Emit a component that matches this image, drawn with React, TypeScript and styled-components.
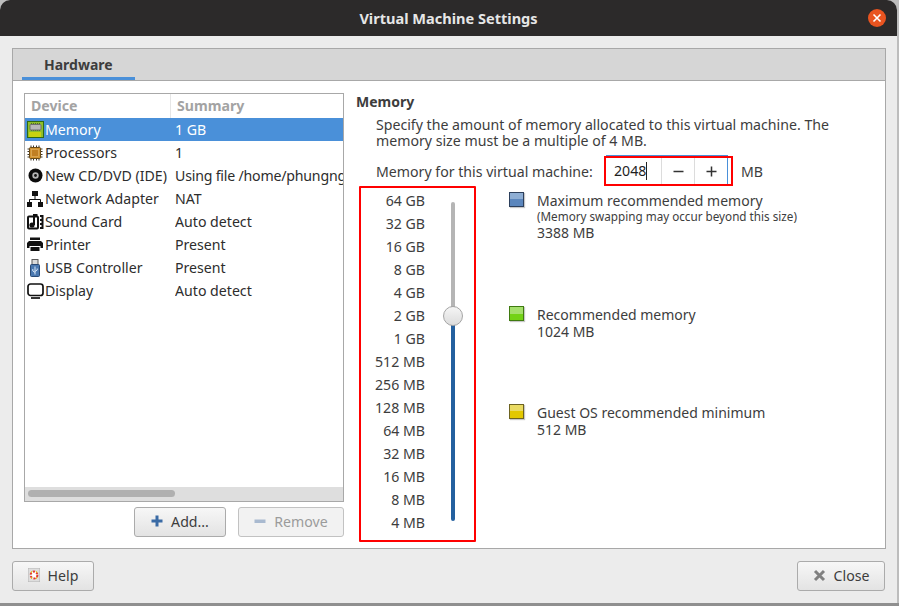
import styled, { createGlobalStyle } from "styled-components";

const Global = createGlobalStyle`
  html, body { margin: 0; padding: 0; background: #bdbdbd; }
  * { box-sizing: border-box; }
`;

const Dialog = styled.div`
  width: 899px;
  height: 606px;
  overflow: hidden;
  font-family: "Noto Sans", "Open Sans", sans-serif;
  font-size: 14.15px;
  color: #3d3d3d;
  background: linear-gradient(#0000 0 603px, #8f8f8f 603px);
`;
const Window = styled.div`
  width: 897px;
  height: 603px;
  background: #ececec;
  border-radius: 10px 10px 0 0;
  display: flex;
  flex-direction: column;
`;
const TitleBar = styled.header`
  height: 36px;
  flex: none;
  background: #2c2a2a;
  border-radius: 10px 10px 0 0;
  color: #e6e6e6;
  font-weight: 700;
  font-size: 14.55px;
  display: flex;
  align-items: center;
  justify-content: center;
  position: relative;
`;
const CloseDot = styled.span`
  position: absolute;
  right: 11px;
  top: 9px;
  width: 18px;
  height: 18px;
  border-radius: 50%;
  background: #e95420;
  display: flex;
  align-items: center;
  justify-content: center;
`;
const Panel = styled.section`
  margin: 12px 11px 0 12px;
  height: 501px;
  border: 1px solid #a8a8a8;
  background: #fff;
  display: flex;
  flex-direction: column;
`;
const TabBar = styled.div`
  height: 32px;
  flex: none;
  background: #d6d6d6;
  border-bottom: 1px solid #a8a8a8;
  padding-left: 9px;
`;
const Tab = styled.div`
  width: 113px;
  height: 31px;
  border-bottom: 3px solid #4a90d9;
  padding-left: 22px;
  font-weight: 700;
  font-size: 14px;
  line-height: 32px;
  color: #3d3d3d;
`;
const Body = styled.div`
  flex: 1;
  display: flex;
  padding: 12px 0 0 11px;
`;
const LeftCol = styled.div`
  width: 320px;
  flex: none;
  display: flex;
  flex-direction: column;
`;
const List = styled.div`
  height: 409px;
  border: 1px solid #a8a8a8;
  display: flex;
  flex-direction: column;
`;
const ListHead = styled.div`
  height: 24px;
  flex: none;
  display: flex;
  font-weight: 700;
  color: #a3a3a3;
  line-height: 24px;
`;
const HeadCell = styled.div<{ $w?: number }>`
  width: ${(p) => (p.$w ? `${p.$w}px` : "auto")};
  padding-left: 6px;
  border-right: ${(p) => (p.$w ? "1px solid #e6e6e6" : "none")};
`;
const Rows = styled.div`
  flex: 1;
`;
const Row = styled.div<{ $active?: boolean }>`
  height: 23px;
  display: flex;
  align-items: center;
  white-space: nowrap;
  overflow: hidden;
  color: ${(p) => (p.$active ? "#fff" : "#2d2d2d")};
  background: ${(p) => (p.$active ? "#4a90d9" : "transparent")};
`;
const RowIcon = styled.span`
  width: 20px;
  flex: none;
  display: flex;
  justify-content: center;
`;
const RowName = styled.span`
  width: 130px;
  flex: none;
`;
const RowValue = styled.span<{ $tight?: boolean }>`
  flex: 1;
  overflow: hidden;
  letter-spacing: ${(p) => (p.$tight ? "-0.2px" : "0")};
`;
const ScrollTrack = styled.div`
  height: 14px;
  flex: none;
  background: #dedede;
  padding: 3px 3px 0;
`;
const ScrollThumb = styled.div`
  width: 147px;
  height: 7px;
  border-radius: 4px;
  background: #b0b0b0;
`;
const ListButtons = styled.div`
  display: flex;
  justify-content: flex-end;
  gap: 12px;
  margin-top: 5px;
`;
const Btn = styled.button<{ $w: number; $disabled?: boolean }>`
  width: ${(p) => p.$w}px;
  height: 30px;
  border: 1px solid ${(p) => (p.$disabled ? "#c2c2c2" : "#ababab")};
  border-radius: 3px;
  background: ${(p) =>
    p.$disabled ? "#f2f2f2" : "linear-gradient(#f7f7f7, #e3e3e3)"};
  color: ${(p) => (p.$disabled ? "#9b9b9b" : "#3d3d3d")};
  font: inherit;
  padding: 0 0 2px;
  display: flex;
  align-items: center;
  justify-content: center;
  gap: 8px;
`;
const RightCol = styled.div`
  flex: 1;
  padding-left: 12px;
  min-width: 0;
`;
const Heading = styled.div`
  font-weight: 700;
  font-size: 14px;
  line-height: 18px;
`;
const Description = styled.p`
  margin: 6px 0 0 20px;
  line-height: 16px;
  width: 490px;
`;
const SpinRow = styled.div`
  display: flex;
  align-items: center;
  margin: 7px 0 0 20px;
  height: 30px;
`;
const SpinLabel = styled.span`
  width: 228px;
  flex: none;
`;
const SpinBox = styled.div`
  width: 129px;
  height: 30px;
  border: 2px solid #f00;
  background: #fff;
  color: #1f1f1f;
`;
const SpinField = styled.div`
  position: relative;
  width: 122px;
  height: 100%;
  border-right: 1px solid #4a90d9;
  display: flex;
  align-items: stretch;
  &::before {
    content: "";
    position: absolute;
    left: 0;
    right: -1px;
    top: -3px;
    height: 1px;
    background: #4a90d9;
  }
`;
const SpinValue = styled.span`
  width: 55px;
  padding-left: 8px;
  line-height: 26px;
  display: flex;
  align-items: center;
`;
const Caret = styled.i`
  width: 1px;
  height: 18px;
  background: #222;
`;
const SpinBtn = styled.span`
  width: 33px;
  border-left: 1px solid #dcdcdc;
  display: flex;
  align-items: center;
  justify-content: center;
`;
const Unit = styled.span`
  margin-left: 8px;
`;
const SliderArea = styled.div`
  display: flex;
  align-items: flex-start;
`;
const SliderBox = styled.div`
  margin-left: 3px;
  width: 117px;
  height: 356px;
  border: 2px solid #f00;
  border-radius: 1px;
  display: flex;
`;
const Scale = styled.div`
  width: 64px;
  flex: none;
  padding-top: 1px;
  text-align: right;
`;
const ScaleItem = styled.div`
  height: 23px;
  line-height: 23px;
`;
const Track = styled.div`
  position: relative;
  margin: 14px 0 0 26px;
  width: 4px;
  height: 319px;
  border-radius: 2px;
  background: linear-gradient(#b5b5b5 0 114px, #24609f 114px);
`;
const Thumb = styled.span`
  position: absolute;
  left: -8px;
  top: 104px;
  width: 20px;
  height: 20px;
  border-radius: 50%;
  border: 1px solid #a5a5a5;
  background: linear-gradient(#f5f5f5, #dcdcdc);
`;
const Legend = styled.div`
  margin-left: 33px;
  display: flex;
  flex-direction: column;
`;
const LegendItem = styled.div<{ $h: number }>`
  height: ${(p) => p.$h}px;
  display: flex;
  gap: 13px;
  padding-top: 6px;
`;
const Swatch = styled.span<{ $top: string; $bottom: string; $edge: string }>`
  width: 15px;
  height: 15px;
  flex: none;
  border: 1px solid ${(p) => p.$edge};
  background: linear-gradient(${(p) => p.$top} 50%, ${(p) => p.$bottom} 50%);
  box-shadow: 1px 1px 1px #c8c8c8;
`;
const LegendText = styled.div`
  font-size: 14px;
  line-height: 17px;
`;
const LegendNote = styled.div`
  font-size: 11.7px;
  line-height: 15px;
`;
const Footer = styled.footer`
  display: flex;
  justify-content: space-between;
  padding: 12px 12px 0;
`;

const MemoryIcon = () => (
  <svg width="17" height="17" viewBox="0 0 17 17">
    <rect x="0.5" y="0.5" width="16" height="16" fill="#8fbf2a" stroke="#2f6a12" />
    <path d="M3 11v5M5 11v5M7 11v5M9 11v5M11 11v5M13 11v5" stroke="#f0e000" strokeWidth="1.2" />
    <path d="M4.5 2v8M6.5 2v8M8.5 2v8M10.5 2v8M12.5 2v8" stroke="#4f6a2a" />
    <rect x="3" y="3.5" width="11" height="5.5" rx="1" fill="#b8b8b8" stroke="#6f6f6f" />
  </svg>
);
const CpuIcon = () => (
  <svg width="16" height="16" viewBox="0 0 16 16">
    <path d="M4 0.5v15M6.5 0.5v15M9.5 0.5v15M12 0.5v15M0.5 4h15M0.5 6.5h15M0.5 9.5h15M0.5 12h15" stroke="#3d3526" />
    <rect x="2.5" y="2.5" width="11" height="11" rx="1" fill="#d2932f" stroke="#6b4a14" />
    <rect x="4.5" y="4.5" width="7" height="7" fill="#c17f22" stroke="#e2b05f" strokeWidth="0.7" />
  </svg>
);
const DiscIcon = () => (
  <svg width="15" height="15" viewBox="0 0 15 15">
    <circle cx="7.5" cy="7.5" r="7" fill="#0c0c0c" />
    <circle cx="7.5" cy="7.5" r="3.2" fill="#b5b5b5" />
    <circle cx="7.5" cy="7.5" r="1.4" fill="#111" />
  </svg>
);
const NetIcon = () => (
  <svg width="16" height="16" viewBox="0 0 16 16">
    <rect x="5" y="0" width="6" height="5" fill="#111" />
    <rect x="0" y="11" width="5" height="5" fill="#111" />
    <rect x="11" y="11" width="5" height="5" fill="#111" />
    <path d="M8 5v3M2.5 11V8.5h11V11" fill="none" stroke="#111" />
  </svg>
);
const SoundIcon = () => (
  <svg width="17" height="16" viewBox="0 0 17 16">
    <rect x="1" y="2.5" width="10" height="12" rx="1" fill="#fff" stroke="#111" strokeWidth="2" />
    <path d="M7 11V1h3.5" fill="none" stroke="#111" strokeWidth="2" />
    <circle cx="5" cy="11" r="2.6" fill="#111" />
    <path d="M13 1h3.5v14H13v-2h1.5v-2H13V9h1.5V7H13V5h1.5V3H13z" fill="#111" />
  </svg>
);
const PrinterIcon = () => (
  <svg width="16" height="15" viewBox="0 0 16 15">
    <rect x="3" y="0.5" width="10" height="2.5" fill="#111" />
    <path d="M2 4h12l2 2v5h-2.5V9h-11v2H0V6z" fill="#111" />
    <rect x="3.5" y="10" width="9" height="4" fill="#111" />
  </svg>
);
const UsbIcon = () => (
  <svg width="12" height="18" viewBox="0 0 12 18">
    <rect x="3" y="0.5" width="6" height="5" fill="#dadada" stroke="#5a5a5a" />
    <rect x="1.5" y="5.5" width="9" height="12" rx="1" fill="#4a78b0" stroke="#2a4a74" />
    <path d="M6 7.5v8M3.8 10v2l2.2 1.4M8.2 9.5v1.6L6 12.5" fill="none" stroke="#d5e4f4" />
  </svg>
);
const DisplayIcon = () => (
  <svg width="17" height="16" viewBox="0 0 17 16">
    <rect x="1" y="1" width="15" height="11.5" rx="2.5" fill="#fff" stroke="#111" strokeWidth="1.7" />
    <path d="M4 15h9" stroke="#111" strokeWidth="1.7" />
  </svg>
);
const PlusIcon = () => (
  <svg width="12" height="12" viewBox="0 0 12 12">
    <path d="M4.5 0.5h3v4h4v3h-4v4h-3v-4h-4v-3h4z" fill="#3a6ba5" />
  </svg>
);
const MinusIcon = () => (
  <svg width="12" height="12" viewBox="0 0 12 12">
    <rect x="0.5" y="4.5" width="11" height="3.5" fill="#a9bad0" />
  </svg>
);
const HelpIcon = () => (
  <svg width="12" height="14" viewBox="0 0 12 14">
    <rect x="0" y="0" width="12" height="14" fill="#dedede" stroke="#b5b5b5" />
    <circle cx="6" cy="7" r="3.4" fill="#fff" stroke="#e23c2e" strokeWidth="2" strokeDasharray="2.2 1.4" />
    <path d="M3 4h1M8 4h1M3 10h1M8 10h1" stroke="#e8c800" strokeWidth="1.5" />
  </svg>
);
const CrossIcon = () => (
  <svg width="13" height="13" viewBox="0 0 13 13">
    <path d="M2 2l9 9M11 2l-9 9" stroke="#808080" strokeWidth="3" />
  </svg>
);

const rows = [
  { icon: <MemoryIcon />, name: "Memory", value: "1 GB", active: true },
  { icon: <CpuIcon />, name: "Processors", value: "1" },
  { icon: <DiscIcon />, name: "New CD/DVD (IDE)", value: "Using file /home/phungng", tight: true },
  { icon: <NetIcon />, name: "Network Adapter", value: "NAT" },
  { icon: <SoundIcon />, name: "Sound Card", value: "Auto detect" },
  { icon: <PrinterIcon />, name: "Printer", value: "Present" },
  { icon: <UsbIcon />, name: "USB Controller", value: "Present" },
  { icon: <DisplayIcon />, name: "Display", value: "Auto detect" },
];

const scale = [
  "64 GB", "32 GB", "16 GB", "8 GB", "4 GB", "2 GB", "1 GB", "512 MB",
  "256 MB", "128 MB", "64 MB", "32 MB", "16 MB", "8 MB", "4 MB",
];

export default function App() {
  return (
    <Dialog>
      <Global />
      <Window>
        <TitleBar>
          Virtual Machine Settings
          <CloseDot>
            <svg width="10" height="10" viewBox="0 0 10 10">
              <path d="M1.5 1.5l7 7M8.5 1.5l-7 7" stroke="#fff" strokeWidth="1.6" />
            </svg>
          </CloseDot>
        </TitleBar>
        <Panel>
          <TabBar>
            <Tab>Hardware</Tab>
          </TabBar>
          <Body>
            <LeftCol>
              <List>
                <ListHead>
                  <HeadCell $w={146}>Device</HeadCell>
                  <HeadCell>Summary</HeadCell>
                </ListHead>
                <Rows>
                  {rows.map((r) => (
                    <Row key={r.name} $active={r.active}>
                      <RowIcon>{r.icon}</RowIcon>
                      <RowName>{r.name}</RowName>
                      <RowValue $tight={r.tight}>{r.value}</RowValue>
                    </Row>
                  ))}
                </Rows>
                <ScrollTrack>
                  <ScrollThumb />
                </ScrollTrack>
              </List>
              <ListButtons>
                <Btn $w={92}>
                  <PlusIcon />
                  Add...
                </Btn>
                <Btn $w={106} $disabled>
                  <MinusIcon />
                  Remove
                </Btn>
              </ListButtons>
            </LeftCol>
            <RightCol>
              <Heading>Memory</Heading>
              <Description>
                Specify the amount of memory allocated to this virtual machine. The
                memory size must be a multiple of 4 MB.
              </Description>
              <SpinRow>
                <SpinLabel>Memory for this virtual machine:</SpinLabel>
                <SpinBox>
                  <SpinField>
                    <SpinValue>
                      2048
                      <Caret />
                    </SpinValue>
                    <SpinBtn>
                      <svg width="11" height="11" viewBox="0 0 11 11">
                        <path d="M0.5 5.5h10" stroke="#333" strokeWidth="1.5" />
                      </svg>
                    </SpinBtn>
                    <SpinBtn>
                      <svg width="11" height="11" viewBox="0 0 11 11">
                        <path d="M0.5 5.5h10M5.5 0.5v10" stroke="#333" strokeWidth="1.5" />
                      </svg>
                    </SpinBtn>
                  </SpinField>
                </SpinBox>
                <Unit>MB</Unit>
              </SpinRow>
              <SliderArea>
                <SliderBox>
                  <Scale>
                    {scale.map((s) => (
                      <ScaleItem key={s}>{s}</ScaleItem>
                    ))}
                  </Scale>
                  <Track>
                    <Thumb />
                  </Track>
                </SliderBox>
                <Legend>
                  <LegendItem $h={114}>
                    <Swatch $top="#8eaed4" $bottom="#5b86bd" $edge="#2c3f5c" />
                    <LegendText>
                      Maximum recommended memory
                      <LegendNote>(Memory swapping may occur beyond this size)</LegendNote>
                      3388 MB
                    </LegendText>
                  </LegendItem>
                  <LegendItem $h={98}>
                    <Swatch $top="#a5e06c" $bottom="#73d216" $edge="#3f7a10" />
                    <LegendText>
                      Recommended memory
                      <br />
                      1024 MB
                    </LegendText>
                  </LegendItem>
                  <LegendItem $h={98}>
                    <Swatch $top="#eadb63" $bottom="#e3c800" $edge="#6d6320" />
                    <LegendText>
                      Guest OS recommended minimum
                      <br />
                      512 MB
                    </LegendText>
                  </LegendItem>
                </Legend>
              </SliderArea>
            </RightCol>
          </Body>
        </Panel>
        <Footer>
          <Btn $w={82}>
            <HelpIcon />
            Help
          </Btn>
          <Btn $w={88}>
            <CrossIcon />
            Close
          </Btn>
        </Footer>
      </Window>
    </Dialog>
  );
}
